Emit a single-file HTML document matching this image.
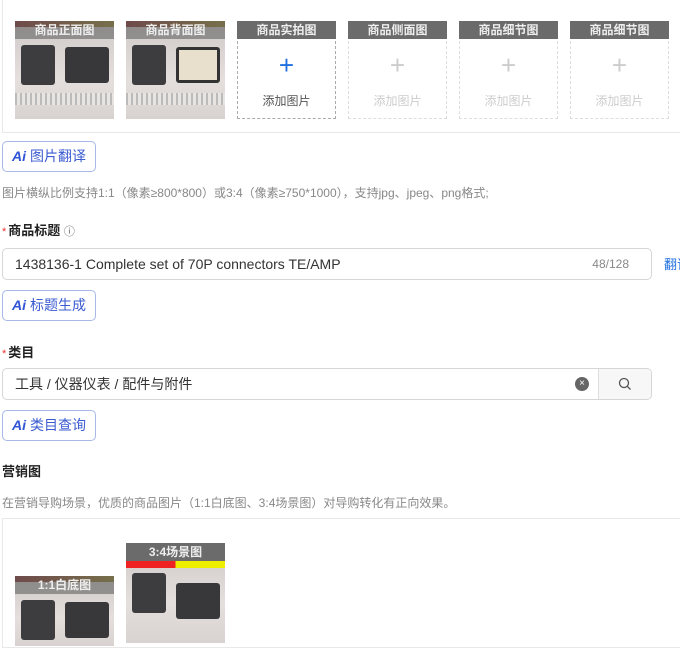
<!DOCTYPE html>
<html><head><meta charset="utf-8"><style>
*{box-sizing:border-box;margin:0;padding:0}
body{width:680px;height:637px;overflow:hidden;background:#fff;font-family:"Liberation Sans","Noto Sans CJK SC",sans-serif;position:relative;color:#333}
.abs{position:absolute}
.panel{position:absolute;border:1px solid #e8e8e8;border-right:none}
.box{position:absolute;width:99px;height:98px;border:1px dashed #ddd;text-align:center}
.hd{position:absolute;left:-1px;top:-1px;width:99px;height:18px;background:#6b6b6b;color:#eee;font-size:12px;line-height:18px;font-weight:bold;text-align:center}
.plus{position:absolute;left:0;right:0;top:30px;font-size:26px;line-height:26px;color:#ccc;font-weight:300}
.add{position:absolute;left:0;right:0;top:70px;font-size:12px;color:#ccc}
.photo{position:absolute;overflow:hidden;background:linear-gradient(180deg,#cfc9c8,#e4dfdd 60%,#d8d2d0)}
.photo .a{position:absolute;left:6px;top:24px;width:34px;height:40px;background:#3d3d40;border-radius:3px}
.photo .b{position:absolute;left:50px;top:26px;width:44px;height:36px;background:#38383b;border-radius:3px}
.photo .c{position:absolute;left:0;top:72px;width:100%;height:12px;background:repeating-linear-gradient(90deg,#bbb 0 2px,#e8e4e2 2px 5px)}
.photo .top{position:absolute;left:0;top:0;width:100%;height:6px;background:linear-gradient(90deg,#8a3a3a,#9a8a3a)}
.aibtn{position:absolute;left:2px;width:94px;height:31px;border:1px solid #a8b8e8;border-radius:5px;font-size:14px;color:#3b5bd1;line-height:29px;padding-left:9px}
.aibtn b{font-style:italic;font-weight:900;color:#2f54d6;margin-right:4px}
.lbl{position:absolute;left:2px;font-size:13px;font-weight:bold;color:#222}
.lbl i{color:#e33;font-style:normal;font-weight:normal;font-size:11px;margin-right:2px}
.hint{position:absolute;left:2px;font-size:12px;color:#888;white-space:nowrap}
.inp{position:absolute;left:2px;width:650px;height:32px;border:1px solid #d6d6d6;border-radius:5px;font-size:14px;line-height:30px;padding-left:12px;color:#333}
</style></head><body>
<div class="panel" style="left:2px;top:-2px;width:680px;height:135px"></div>

<div class="photo" style="left:15px;top:21px;width:99px;height:98px"><div class="top"></div><div class="a"></div><div class="b"></div><div class="c"></div><div class="hd" style="left:0;top:0;background:rgba(90,90,90,.55)">商品正面图</div></div>
<div class="photo" style="left:126px;top:21px;width:99px;height:98px"><div class="top"></div><div class="a"></div><div class="b" style="background:#e8e0cc;border:3px solid #333"></div><div class="c"></div><div class="hd" style="left:0;top:0;background:rgba(90,90,90,.55)">商品背面图</div></div>
<div class="box" style="left:237px;top:21px;border-color:#aaa"><div class="hd">商品实拍图</div><div class="plus" style="color:#1f6fe0">+</div><div class="add" style="color:#555">添加图片</div></div>
<div class="box" style="left:348px;top:21px"><div class="hd">商品侧面图</div><div class="plus">+</div><div class="add">添加图片</div></div>
<div class="box" style="left:459px;top:21px"><div class="hd">商品细节图</div><div class="plus">+</div><div class="add">添加图片</div></div>
<div class="box" style="left:570px;top:21px"><div class="hd">商品细节图</div><div class="plus">+</div><div class="add">添加图片</div></div>

<div class="aibtn" style="top:141px"><b>Ai</b>图片翻译</div>
<div class="hint" style="top:184px">图片横纵比例支持1:1（像素≥800*800）或3:4（像素≥750*1000），支持jpg、jpeg、png格式;</div>

<div class="lbl" style="top:220px"><i>*</i>商品标题 <span style="font-weight:normal;font-size:11px;color:#666">ⓘ</span></div>
<div class="inp" style="top:248px">1438136-1 Complete set of 70P connectors TE/AMP<span style="position:absolute;right:22px;font-size:12px;color:#888">48/128</span></div>
<div class="abs" style="left:664px;top:254px;font-size:13px;color:#1f6fe0;white-space:nowrap">翻译</div>
<div class="aibtn" style="top:290px"><b>Ai</b>标题生成</div>

<div class="lbl" style="top:342px"><i>*</i>类目</div>
<div class="inp" style="top:368px">工具 / 仪器仪表 / 配件与附件
<span style="position:absolute;right:62px;top:8px;width:14px;height:14px;border-radius:50%;background:#666;color:#fff;font-size:10px;line-height:14px;text-align:center">×</span>
<span style="position:absolute;right:0;top:0;width:53px;height:30px;border-left:1px solid #ddd;background:#f7f7f7;border-radius:0 5px 5px 0"><svg width="14" height="14" viewBox="0 0 14 14" style="position:absolute;left:19px;top:8px"><circle cx="6" cy="6" r="4.5" fill="none" stroke="#555" stroke-width="1.3"/><path d="M9.3 9.3L12.5 12.5" stroke="#555" stroke-width="1.3"/></svg></span></div>
<div class="aibtn" style="top:410px"><b>Ai</b>类目查询</div>

<div class="lbl" style="top:461px">营销图</div>
<div class="hint" style="top:494px">在营销导购场景，优质的商品图片（1:1白底图、3:4场景图）对导购转化有正向效果。</div>
<div class="panel" style="left:2px;top:518px;width:680px;height:130px"></div>
<div class="photo" style="left:15px;top:576px;width:99px;height:70px"><div class="top"></div><div class="a"></div><div class="b"></div><div class="hd" style="left:0;top:0;background:rgba(90,90,90,.55)">1:1白底图</div></div>
<div class="photo" style="left:126px;top:543px;width:99px;height:100px"><div class="top" style="top:18px;height:7px;background:linear-gradient(90deg,#e22 0 50%,#ee0 50%)"></div><div class="a" style="top:30px"></div><div class="b" style="top:40px"></div><div class="hd" style="left:0;top:0;background:#6b6b6b">3:4场景图</div></div>
</body></html>
